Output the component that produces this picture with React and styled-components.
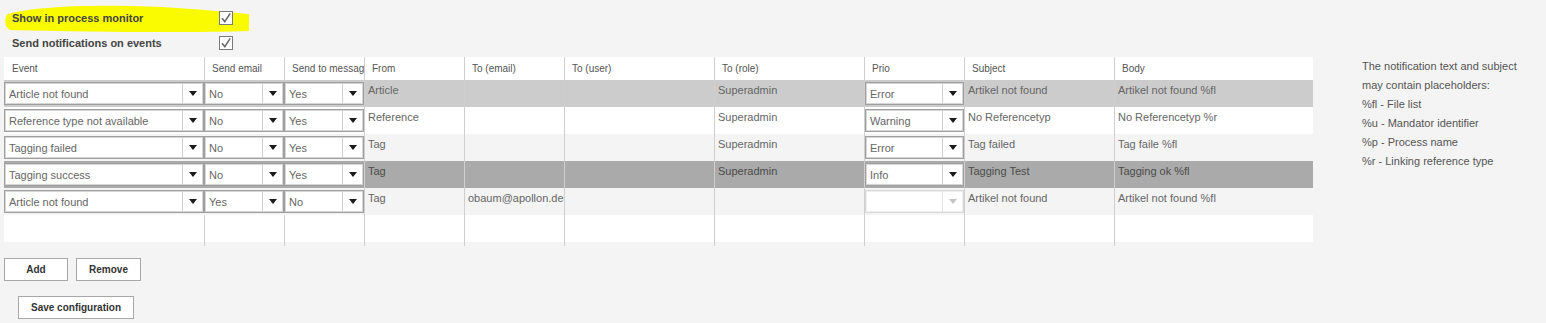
import React from 'react';
import styled, { createGlobalStyle } from 'styled-components';

const Global = createGlobalStyle`
  html, body { margin: 0; padding: 0; background: #f4f4f4; }
  body { font-family: "Liberation Sans", Arial, sans-serif; color: #555; }
  #root { width: 1546px; height: 323px; overflow: hidden; }
`;

const COLS = '200px 80px 80px 100px 100px 150px 150px 100px 150px 199px';

const Page = styled.div`
  box-sizing: border-box;
  padding-top: 5px;
  width: 1546px;
`;

const Options = styled.div`
  display: flex;
  flex-direction: column;
  padding-left: 12px;
`;

const OptionRow = styled.div`
  position: relative;
  display: flex;
  align-items: center;
  height: 25px;
  font-size: 11px;
  font-weight: bold;
  color: #444;
`;

const OptionLabel = styled.span`
  position: relative;
  z-index: 1;
  width: 207px;
`;

const Marker = styled.svg`
  position: absolute;
  left: -12px;
  top: -2px;
  z-index: 0;
`;

const CheckBox = styled.span`
  position: relative;
  z-index: 1;
  box-sizing: border-box;
  width: 14px;
  height: 14px;
  border: 1px solid #7a7a7a;
  background: #fff;
  display: flex;
  align-items: center;
  justify-content: center;
`;

const Main = styled.div`
  display: flex;
  align-items: flex-start;
  margin-top: 2px;
`;

const TableWrap = styled.div`
  margin-left: 4px;
  width: 1309px;
`;

const HeadRow = styled.div`
  display: grid;
  grid-template-columns: ${COLS};
  height: 23px;
  background: #fff;
`;

const HeadCell = styled.div`
  box-sizing: border-box;
  font-size: 10px;
  color: #555;
  padding-left: ${p => (p.$first ? 8 : 7)}px;
  border-left: ${p => (p.$first ? 'none' : '1px solid #cfcfcf')};
  display: flex;
  align-items: center;
  white-space: nowrap;
  overflow: hidden;
`;

const Row = styled.div`
  display: grid;
  grid-template-columns: ${COLS};
  height: ${p => p.$h || 27}px;
  background: ${p => p.$bg};
`;

const TextCell = styled.div`
  box-sizing: border-box;
  border-left: ${p => (p.$first ? 'none' : '1px solid #cfcfcf')};
  padding: 4px 0 0 3px;
  font-size: 11px;
  line-height: 13px;
  color: ${p => (p.$dark ? '#4a4a4a' : '#666')};
  white-space: nowrap;
  overflow: hidden;
`;

const SelectCell = styled.div`
  box-sizing: border-box;
  padding-top: 2px;
  border-left: ${p => (p.$line ? '1px solid #cfcfcf' : 'none')};
`;

const Select = styled.div`
  box-sizing: border-box;
  display: flex;
  height: 23px;
  width: 100%;
  background: #fff;
  border: 1px solid ${p => (p.$disabled ? '#d8d8d8' : '#9f9f9f')};
  box-shadow: inset 0 0 0 1px ${p => (p.$disabled ? '#eee' : '#d6d6d6')};
`;

const SelectText = styled.span`
  flex: 1;
  padding-left: 4px;
  font-size: 11px;
  color: #666;
  display: flex;
  align-items: center;
  white-space: nowrap;
  overflow: hidden;
`;

const SelectArrow = styled.span`
  width: 20px;
  border-left: 1px solid ${p => (p.$disabled ? '#e2e2e2' : '#cfcfcf')};
  display: flex;
  align-items: center;
  justify-content: center;
  &::after {
    content: '';
    border-left: 4px solid transparent;
    border-right: 4px solid transparent;
    border-top: 5px solid ${p => (p.$disabled ? '#c4c4c4' : '#1a1a1a')};
  }
`;

const Notes = styled.div`
  margin-left: 49px;
  font-size: 11px;
  line-height: 19px;
  color: #555;
`;

const Buttons = styled.div`
  display: flex;
  gap: 8px;
  margin-top: 12px;
`;

const Button = styled.button`
  box-sizing: border-box;
  width: ${p => p.$w}px;
  height: 23px;
  margin: 0;
  padding: 0;
  background: #fff;
  border: 1px solid #a8a8a8;
  font-family: "Liberation Sans", Arial, sans-serif;
  font-size: 10px;
  font-weight: bold;
  color: #333;
`;

const SaveBar = styled.div`
  margin: 15px 0 0 18px;
`;

const Check = () => (
  <svg width="12" height="12" viewBox="0 0 12 12">
    <path d="M2 6.2 L4.8 9.6 L10.2 1.4" fill="none" stroke="#6a6a6a" strokeWidth="1.6" />
  </svg>
);

const Dropdown = ({ value, disabled }) => (
  <Select $disabled={disabled}>
    <SelectText>{value}</SelectText>
    <SelectArrow $disabled={disabled} />
  </Select>
);

const headers = ['Event', 'Send email', 'Send to message', 'From', 'To (email)', 'To (user)', 'To (role)', 'Prio', 'Subject', 'Body'];

const rows = [
  { bg: '#cccccc', ev: 'Article not found', mail: 'No', msg: 'Yes', from: 'Article', email: '', user: '', role: 'Superadmin', prio: 'Error', subj: 'Artikel not found', body: 'Artikel not found %fl' },
  { bg: '#ffffff', ev: 'Reference type not available', mail: 'No', msg: 'Yes', from: 'Reference', email: '', user: '', role: 'Superadmin', prio: 'Warning', subj: 'No Referencetyp', body: 'No Referencetyp %r' },
  { bg: '#f4f4f4', ev: 'Tagging failed', mail: 'No', msg: 'Yes', from: 'Tag', email: '', user: '', role: 'Superadmin', prio: 'Error', subj: 'Tag failed', body: 'Tag faile %fl' },
  { bg: '#aaaaaa', dark: true, ev: 'Tagging success', mail: 'No', msg: 'Yes', from: 'Tag', email: '', user: '', role: 'Superadmin', prio: 'Info', subj: 'Tagging Test', body: 'Tagging ok %fl' },
  { bg: '#f4f4f4', ev: 'Article not found', mail: 'Yes', msg: 'No', from: 'Tag', email: 'obaum@apollon.de', user: '', role: '', prio: '', prioDisabled: true, subj: 'Artikel not found', body: 'Artikel not found %fl' },
];

const notes = [
  'The notification text and subject',
  'may contain placeholders:',
  '%fl - File list',
  '%u - Mandator identifier',
  '%p - Process name',
  '%r - Linking reference type',
];

export default function App() {
  return (
    <Page>
      <Global />
      <Options>
        <OptionRow>
          <Marker width="252" height="30" viewBox="0 0 252 30">
            <path
              d="M8 11 C 30 5, 70 2, 130 3 C 180 4, 215 8, 249 11 L 249 28 C 190 30, 90 29, 10 27 C 4 24, 4 14, 8 11 Z"
              fill="#fbfb00"
            />
          </Marker>
          <OptionLabel>Show in process monitor</OptionLabel>
          <CheckBox><Check /></CheckBox>
        </OptionRow>
        <OptionRow>
          <OptionLabel>Send notifications on events</OptionLabel>
          <CheckBox><Check /></CheckBox>
        </OptionRow>
      </Options>
      <Main>
        <TableWrap>
          <HeadRow>
            {headers.map((h, i) => (
              <HeadCell key={h} $first={i === 0}>{h}</HeadCell>
            ))}
          </HeadRow>
          {rows.map((r, i) => (
            <Row key={i} $bg={r.bg}>
              <SelectCell><Dropdown value={r.ev} /></SelectCell>
              <SelectCell><Dropdown value={r.mail} /></SelectCell>
              <SelectCell><Dropdown value={r.msg} /></SelectCell>
              <TextCell $dark={r.dark}>{r.from}</TextCell>
              <TextCell $dark={r.dark}>{r.email}</TextCell>
              <TextCell $dark={r.dark}>{r.user}</TextCell>
              <TextCell $dark={r.dark}>{r.role}</TextCell>
              <SelectCell $line><Dropdown value={r.prio} disabled={r.prioDisabled} /></SelectCell>
              <TextCell $dark={r.dark}>{r.subj}</TextCell>
              <TextCell $dark={r.dark}>{r.body}</TextCell>
            </Row>
          ))}
          <Row $bg="#ffffff">
            {Array.from({ length: 10 }).map((_, i) => <TextCell key={i} $first={i === 0} />)}
          </Row>
          <Row $bg="transparent" $h={4}>
            {Array.from({ length: 10 }).map((_, i) => <TextCell key={i} $first={i === 0} />)}
          </Row>
          <Buttons>
            <Button $w={64}>Add</Button>
            <Button $w={65}>Remove</Button>
          </Buttons>
        </TableWrap>
        <Notes>
          {notes.map(n => <div key={n}>{n}</div>)}
        </Notes>
      </Main>
      <SaveBar>
        <Button $w={116}>Save configuration</Button>
      </SaveBar>
    </Page>
  );
}
